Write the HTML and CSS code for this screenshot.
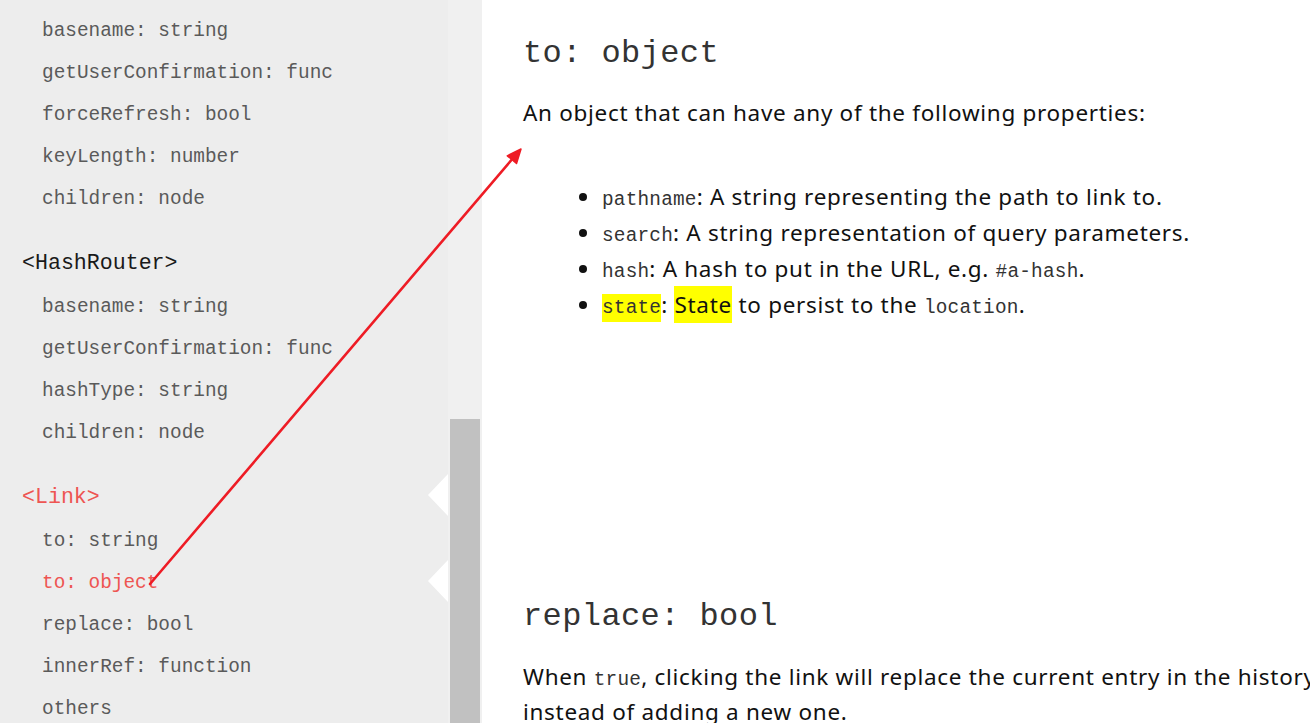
FILE: index.html
```html
<!DOCTYPE html>
<html lang="en">
<head>
<meta charset="utf-8">
<title>Link - to: object</title>
<link rel="stylesheet" href="styles.css">
</head>
<body>
<div class="page">
  <aside class="sidebar">
    <nav class="nav">
      <ul class="items">
        <li>basename: string</li>
        <li>getUserConfirmation: func</li>
        <li>forceRefresh: bool</li>
        <li>keyLength: number</li>
        <li>children: node</li>
      </ul>
      <div class="group-title">&lt;HashRouter&gt;</div>
      <ul class="items">
        <li>basename: string</li>
        <li>getUserConfirmation: func</li>
        <li>hashType: string</li>
        <li>children: node</li>
      </ul>
      <div class="group-title active">&lt;Link&gt;</div>
      <ul class="items">
        <li>to: string</li>
        <li class="active">to: object</li>
        <li>replace: bool</li>
        <li>innerRef: function</li>
        <li>others</li>
      </ul>
    </nav>
    <div class="track"><div class="thumb"></div></div>
  </aside>
  <main class="content">
    <section class="section first">
      <h2 class="title">to: object</h2>
      <p class="text">An object that can have any of the following properties:</p>
      <ul class="props">
        <li><code>pathname</code>: A string representing the path to link to.</li>
        <li><code>search</code>: A string representation of query parameters.</li>
        <li><code>hash</code>: A hash to put in the URL, e.g. <code>#a-hash</code>.</li>
        <li><code class="mark">state</code>: <span class="mark">State</span> to persist to the <code>location</code>.</li>
      </ul>
    </section>
    <section class="section second">
      <h2 class="title">replace: bool</h2>
      <p class="text">When <code>true</code>, clicking the link will replace the current entry in the history instead of adding a new one.</p>
    </section>
  </main>
</div>
<svg class="annotation" width="1310" height="723" viewBox="0 0 1310 723">
  <line x1="150" y1="584" x2="514" y2="157" stroke="#ee1c25" stroke-width="2.6" stroke-linecap="round"/>
  <polygon points="521,149 516.5,163.5 507.3,155.8" fill="#ee1c25" stroke="#ee1c25" stroke-width="1.5" stroke-linejoin="round"/>
</svg>
</body>
</html>
```
FILE: styles.css
```css
html, body {
  margin: 0;
  padding: 0;
  width: 1310px;
  height: 723px;
  overflow: hidden;
  background: #ffffff;
}

.page {
  display: flex;
  height: 723px;
}

.sidebar {
  display: flex;
  flex: 0 0 482px;
  background: #ededed;
  height: 723px;
}

.nav {
  flex: 0 0 448px;
  padding-top: 10px;
  font-family: "Liberation Mono", "DejaVu Sans Mono", monospace;
}

.items {
  list-style: none;
  margin: 0;
  padding: 0;
}

.items li {
  position: relative;
  height: 42px;
  line-height: 42px;
  padding-left: 42px;
  font-size: 19.4px;
  color: #5a5a5a;
  white-space: nowrap;
}

.group-title {
  position: relative;
  margin-top: 20px;
  height: 46px;
  line-height: 46px;
  padding-left: 22px;
  font-size: 21.6px;
  color: #1a1a1a;
}

.group-title.active,
.items li.active {
  color: #ee5552;
}

.group-title.active::after,
.items li.active::after {
  content: "";
  position: absolute;
  right: 0;
  top: 50%;
  margin-top: -23px;
  border-style: solid;
  border-width: 21px 20px 21px 0;
  border-color: transparent #ffffff transparent transparent;
}

.track {
  position: relative;
  flex: 0 0 34px;
  background: #f0f0f0;
}

.thumb {
  position: absolute;
  left: 2px;
  width: 30px;
  top: 419px;
  bottom: 0;
  background: #c1c1c1;
}

.content {
  flex: 0 0 805px;
  padding-left: 41px;
  font-family: "Noto Sans", "Open Sans", sans-serif;
  color: #111111;
}

.title {
  margin: 0;
  font-family: "Liberation Mono", "DejaVu Sans Mono", monospace;
  font-weight: normal;
  font-size: 32px;
  letter-spacing: 0.4px;
  line-height: 44px;
  color: #333333;
}

.section.first {
  padding-top: 32px;
}

.section.second {
  margin-top: 272px;
}

.text {
  margin: 19px 0 0;
  font-size: 22.5px;
  letter-spacing: 0.7px;
  line-height: 36px;
}

.second .text {
  margin-top: 20px;
  line-height: 35px;
}

.props {
  margin: 48px 0 0;
  padding-left: 79px;
  font-size: 22.5px;
  letter-spacing: 0.7px;
}

.props li {
  height: 36px;
  line-height: 36px;
}

code {
  font-family: "Liberation Mono", "DejaVu Sans Mono", monospace;
  font-size: 19.4px;
  letter-spacing: 0.2px;
  line-height: 1;
  color: #333333;
}

.mark {
  background: #ffff00;
  padding: 3px 0;
}

.annotation {
  position: absolute;
  left: 0;
  top: 0;
  pointer-events: none;
}
```
